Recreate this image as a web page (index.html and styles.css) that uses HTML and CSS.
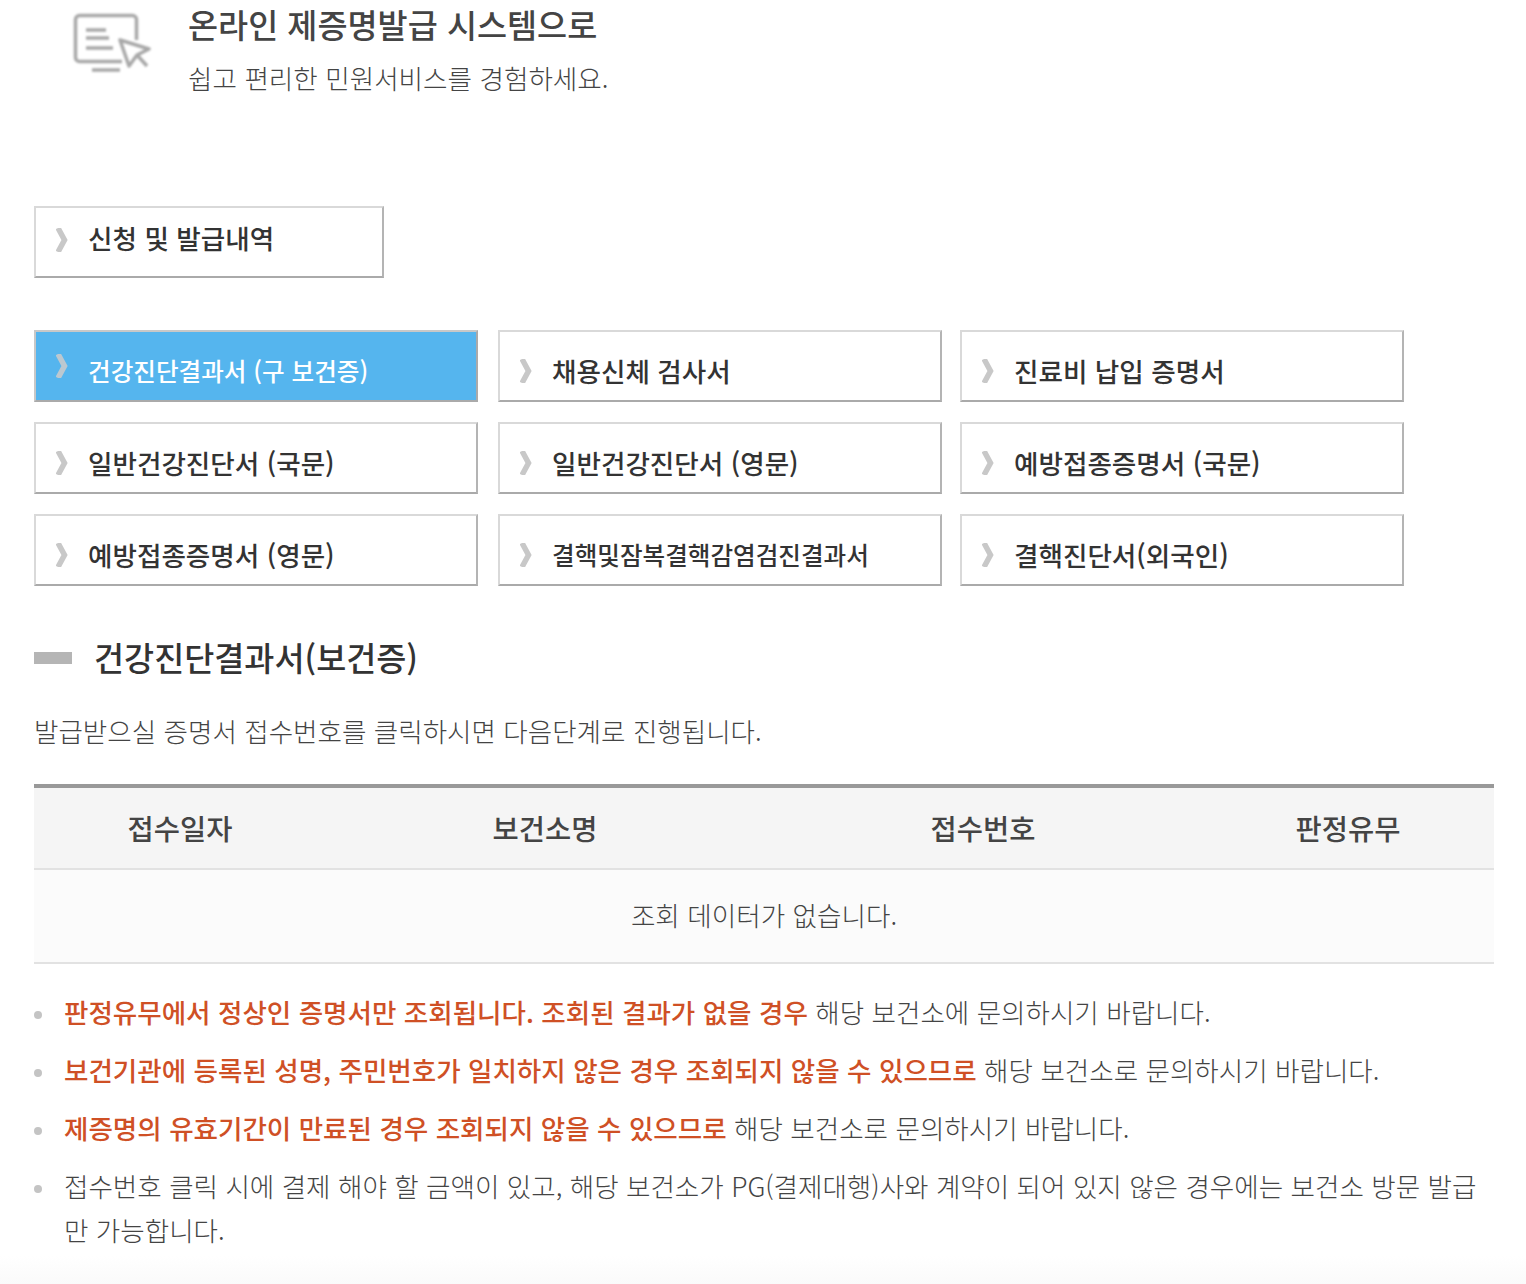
FILE: index.html
```html
<!DOCTYPE html>
<html lang="ko">
<head>
    <title>제증명발급</title>
    <link rel="stylesheet" href="styles.css">
</head>
<body>
    <div class="container">
        <div class="intro">
            <svg class="intro-icon" width="84" height="66" viewBox="0 0 84 66">
                <path d="M52 51.5H9.5a4 4 0 0 1-4-4V9.5a4 4 0 0 1 4-4h53a4 4 0 0 1 4 4V30" fill="none" stroke="#a8a8a8" stroke-width="3.5"/>
                <path d="M16 20h20M16 28h23M16 38h27M22 60h28" fill="none" stroke="#a8a8a8" stroke-width="3.5"/>
                <path d="M50 30L79 39L67 45L59 56ZM67 45L77 56" fill="none" stroke="#a8a8a8" stroke-width="3.5" stroke-linejoin="round"/>
            </svg>
            <div class="intro-text">
                <h2>온라인 제증명발급 시스템으로</h2>
                <p>쉽고 편리한 민원서비스를 경험하세요.</p>
            </div>
        </div>

        <a class="btn btn-single"><svg class="arrow" width="12" height="24" viewBox="0 0 12 24"><path d="M2 0L8.5 12L2 24"/></svg><span>신청 및 발급내역</span></a>

        <div class="btn-grid">
            <a class="btn active"><svg class="arrow" width="12" height="24" viewBox="0 0 12 24"><path d="M2 0L8.5 12L2 24"/></svg><span>건강진단결과서 (구 보건증)</span></a>
            <a class="btn"><svg class="arrow" width="12" height="24" viewBox="0 0 12 24"><path d="M2 0L8.5 12L2 24"/></svg><span>채용신체 검사서</span></a>
            <a class="btn"><svg class="arrow" width="12" height="24" viewBox="0 0 12 24"><path d="M2 0L8.5 12L2 24"/></svg><span>진료비 납입 증명서</span></a>
            <a class="btn"><svg class="arrow" width="12" height="24" viewBox="0 0 12 24"><path d="M2 0L8.5 12L2 24"/></svg><span>일반건강진단서 (국문)</span></a>
            <a class="btn"><svg class="arrow" width="12" height="24" viewBox="0 0 12 24"><path d="M2 0L8.5 12L2 24"/></svg><span>일반건강진단서 (영문)</span></a>
            <a class="btn"><svg class="arrow" width="12" height="24" viewBox="0 0 12 24"><path d="M2 0L8.5 12L2 24"/></svg><span>예방접종증명서 (국문)</span></a>
            <a class="btn"><svg class="arrow" width="12" height="24" viewBox="0 0 12 24"><path d="M2 0L8.5 12L2 24"/></svg><span>예방접종증명서 (영문)</span></a>
            <a class="btn small"><svg class="arrow" width="12" height="24" viewBox="0 0 12 24"><path d="M2 0L8.5 12L2 24"/></svg><span>결핵및잠복결핵감염검진결과서</span></a>
            <a class="btn"><svg class="arrow" width="12" height="24" viewBox="0 0 12 24"><path d="M2 0L8.5 12L2 24"/></svg><span>결핵진단서(외국인)</span></a>
        </div>

        <div class="section-title">
            <i class="title-bar"></i>
            <h3>건강진단결과서(보건증)</h3>
        </div>
        <p class="guide">발급받으실 증명서 접수번호를 클릭하시면 다음단계로 진행됩니다.</p>

        <table class="result">
            <thead>
                <tr>
                    <th class="col-date">접수일자</th>
                    <th class="col-name">보건소명</th>
                    <th class="col-no">접수번호</th>
                    <th class="col-yn">판정유무</th>
                </tr>
            </thead>
            <tbody>
                <tr>
                    <td colspan="4">조회 데이터가 없습니다.</td>
                </tr>
            </tbody>
        </table>

        <ul class="notes">
            <li><strong>판정유무에서 정상인 증명서만 조회됩니다. 조회된 결과가 없을 경우</strong> 해당 보건소에 문의하시기 바랍니다.</li>
            <li><strong>보건기관에 등록된 성명, 주민번호가 일치하지 않은 경우 조회되지 않을 수 있으므로</strong> 해당 보건소로 문의하시기 바랍니다.</li>
            <li><strong>제증명의 유효기간이 만료된 경우 조회되지 않을 수 있으므로</strong> 해당 보건소로 문의하시기 바랍니다.</li>
            <li>접수번호 클릭 시에 결제 해야 할 금액이 있고, 해당 보건소가 PG(결제대행)사와 계약이 되어 있지 않은 경우에는 보건소 방문 발급만 가능합니다.</li>
        </ul>
    </div>
</body>
</html>
```

FILE: styles.css
```css
* {
    box-sizing: border-box;
}
body {
    margin: 0;
    background: linear-gradient(to bottom, white 1256px, #fafafa 1284px);
    color: #444;
    font-family: "Noto Sans CJK KR", "Noto Sans", sans-serif;
    font-weight: 400;
}
h2, h3, p, ul {
    margin: 0;
    padding: 0;
}
.container {
    width: 1460px;
    height: 1284px;
    margin-left: 34px;
    overflow: hidden;
}
.intro {
    display: flex;
    height: 206px;
    padding-left: 36px;
}
.intro-icon {
    flex: none;
    margin-top: 10px;
    filter: blur(0.8px);
}
.intro-text {
    margin-left: 34px;
}
.intro-text h2 {
    font-size: 32.7px;
    line-height: 48px;
    font-weight: 500;
    color: #444;
}
.intro-text p {
    margin-top: 5px;
    font-size: 26.6px;
    line-height: 50px;
    font-weight: 300;
    color: #444;
}
.btn {
    display: flex;
    align-items: center;
    width: 444px;
    height: 72px;
    padding-left: 20px;
    background-color: white;
    border: 2px solid #d9d9d9;
    border-right-color: #b4b4b4;
    border-bottom-color: #aaa;
    font-size: 26.6px;
    font-weight: 500;
    color: #333;
}
.btn span {
    margin-top: 8px;
}
.btn .arrow {
    flex: none;
    margin-top: 10px;
    margin-right: 20px;
    filter: blur(0.6px);
}
.arrow path {
    fill: none;
    stroke: #c8c8c8;
    stroke-width: 5.5;
}
.btn-single {
    width: 350px;
}
.btn-single span {
    margin-top: 0;
    margin-bottom: 10px;
}
.btn-single .arrow {
    margin-top: 0;
    margin-bottom: 4px;
}
.btn-grid {
    display: grid;
    grid-template-columns: 464px 462px 444px;
    row-gap: 20px;
    margin-top: 52px;
}
.btn.active {
    background-color: #55b5ee;
    border-color: #c8c8c8;
    border-right-color: #aaa;
    border-bottom-color: #aaa;
    color: white;
    font-size: 24.6px;
    font-weight: 500;
}
.btn.active .arrow {
    margin-top: 0;
}
.btn.active .arrow path {
    stroke: #bcc8d0;
}
.btn.small {
    font-size: 24.6px;
}
.section-title {
    display: flex;
    align-items: center;
    height: 60px;
    margin-top: 42px;
}
.title-bar {
    width: 38px;
    height: 12px;
    background-color: #b5b5b5;
}
.section-title h3 {
    margin-left: 22px;
    margin-bottom: 4px;
    font-size: 32.7px;
    font-weight: 500;
    color: #333;
}
.guide {
    margin-top: 21px;
    font-size: 26.55px;
    line-height: 44px;
    font-weight: 300;
    color: #444;
}
.result {
    width: 1460px;
    margin-top: 31px;
    border-collapse: collapse;
    border-top: 4px solid #999;
    table-layout: fixed;
}
.result th {
    height: 83px;
    padding-bottom: 3px;
    background-color: #f5f5f5;
    border-bottom: 2px solid #e2e2e2;
    font-size: 28.5px;
    font-weight: 500;
    color: #444;
}
.col-date {
    width: 292px;
}
.col-name {
    width: 438px;
}
.col-no {
    width: 438px;
}
.result td {
    height: 94px;
    padding-bottom: 5px;
    background-color: #fbfbfb;
    border-bottom: 2px solid #e2e2e2;
    text-align: center;
    font-size: 26.6px;
    font-weight: 300;
    color: #444;
}
.notes {
    list-style: none;
    margin-top: 26px;
}
.notes li {
    position: relative;
    padding-left: 30px;
    margin-bottom: 14px;
    font-size: 26.55px;
    line-height: 44px;
    font-weight: 300;
    color: #444;
}
.notes li::before {
    content: "";
    position: absolute;
    left: 0;
    top: 21px;
    width: 8px;
    height: 8px;
    border-radius: 50%;
    background-color: #c4c4c4;
}
.notes strong {
    font-weight: 500;
    color: #cf5025;
}
```
